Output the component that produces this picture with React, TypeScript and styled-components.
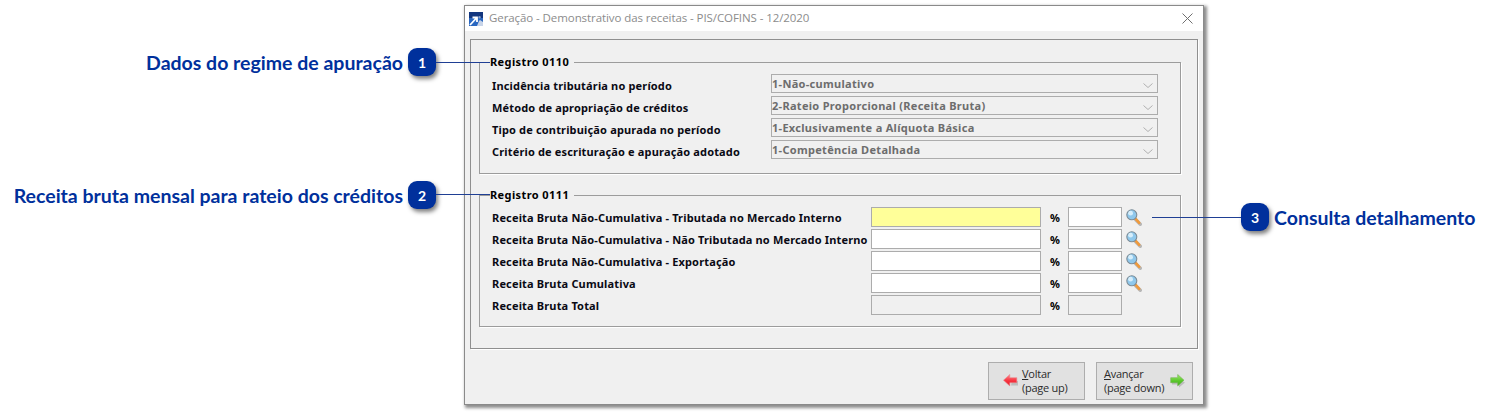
import { ReactNode } from 'react'
import styled, { createGlobalStyle } from 'styled-components'

const NAVY = '#00309c'
const UI_FONT = `Tahoma, "Noto Sans", "DejaVu Sans", sans-serif`

const GlobalStyle = createGlobalStyle`
  html, body {
    margin: 0;
    padding: 0;
    background: #ffffff;
  }
  body {
    overflow: hidden;
  }
`

const Page = styled.div`
  display: flex;
  width: 1491px;
  height: 417px;
  overflow: hidden;
  background: #ffffff;
`

const LeftNotes = styled.div`
  flex: 0 0 436px;
  display: flex;
  flex-direction: column;
  align-items: flex-end;
  gap: 105px;
  padding-top: 48px;
  margin-right: 28px;
  position: relative;
  z-index: 2;
`

const RightNotes = styled.div`
  display: flex;
  flex-direction: column;
  padding-top: 203px;
  margin-left: 37px;
  position: relative;
  z-index: 2;
`

const Callout = styled.div`
  position: relative;
  display: flex;
  align-items: center;
  gap: 5px;
  height: 28px;
  white-space: nowrap;
  font: 700 19.5px Lato, "Open Sans", sans-serif;
  color: ${NAVY};
`

const Badge = styled.span`
  display: flex;
  align-items: center;
  justify-content: center;
  width: 28px;
  height: 28px;
  border-radius: 9px;
  background: ${NAVY};
  color: #ffffff;
  font: 700 14px Lato, "Open Sans", sans-serif;
  box-shadow: 2px 3px 4px rgba(0, 0, 0, 0.5);
`

const Leader = styled.span<{ $side: 'before' | 'after'; $width: number; $top: number }>`
  position: absolute;
  ${({ $side }) => ($side === 'after' ? 'left' : 'right')}: 100%;
  top: ${({ $top }) => $top}px;
  width: ${({ $width }) => $width}px;
  height: 1px;
  background: #1f3f94;
`

const Dialog = styled.div`
  flex: 0 0 740px;
  box-sizing: border-box;
  width: 740px;
  height: 400px;
  margin-top: 5px;
  display: flex;
  flex-direction: column;
  background: #f0f0f0;
  border: 1px solid #8a8a8a;
  box-shadow: 2px 2px 3px 1px rgba(0, 0, 0, 0.45);
  font-family: ${UI_FONT};
`

const TitleBar = styled.div`
  flex: 0 0 25px;
  display: flex;
  align-items: center;
  padding: 0 10px 0 4px;
  background: #ffffff;
`

const TitleText = styled.span`
  flex: 1;
  margin-left: 6px;
  padding-bottom: 2px;
  font: 400 11.5px "Open Sans", sans-serif;
  color: #8c8c8c;
  letter-spacing: -0.08px;
`

const Panel = styled.div`
  box-sizing: border-box;
  height: 310px;
  margin: 8px 5px 0 5px;
  padding: 15px 16px 0 8px;
  display: flex;
  flex-direction: column;
  gap: 14px;
  border: 1px solid #8f8f8f;
  box-shadow: 1px 1px 0 #ffffff;
`

const Group = styled.fieldset<{ $height: number; $gap: number }>`
  box-sizing: border-box;
  height: ${({ $height }) => $height}px;
  margin: 0;
  padding: 5px 22px 0 12px;
  min-width: 0;
  display: flex;
  flex-direction: column;
  gap: ${({ $gap }) => $gap}px;
  border: 1px solid #9c9c9c;
  box-shadow: 1px 1px 0 #ffffff;
`

const Legend = styled.legend`
  margin-left: -2px;
  padding: 0 5px 0 0;
  font: 700 11px/14px "Noto Sans", sans-serif;
  letter-spacing: 0.4px;
  color: #000000;
`

const Row = styled.div`
  display: flex;
  align-items: center;
  height: 19px;
`

const Label = styled.span<{ $width: number; $drop: number }>`
  flex: 0 0 ${({ $width }) => $width}px;
  box-sizing: border-box;
  padding-top: ${({ $drop }) => $drop}px;
  font: 700 11px "Noto Sans", sans-serif;
  letter-spacing: 0.16px;
  color: #0a0a14;
  white-space: nowrap;
`

const Combo = styled.div`
  flex: 0 0 387px;
  box-sizing: border-box;
  height: 19px;
  display: flex;
  align-items: center;
  justify-content: space-between;
  padding: 0 4px 0 0;
  border: 1px solid #acacac;
  font: 700 11px "Noto Sans", sans-serif;
  letter-spacing: 0.3px;
  color: #6d6d6d;
`

const ChevronSlot = styled.span`
  display: flex;
  margin-top: 4px;
`

const ValueRow = styled(Row)`
  height: 20px;
`

const Input = styled.div<{ $width: number; $tone?: 'active' | 'disabled' }>`
  flex: 0 0 ${({ $width }) => $width}px;
  box-sizing: border-box;
  height: 20px;
  border: 1px solid #acacac;
  background: ${({ $tone }) =>
    $tone === 'active' ? '#ffff99' : $tone === 'disabled' ? '#f0f0f0' : '#ffffff'};
`

const Percent = styled.span`
  flex: 0 0 27px;
  padding-left: 9px;
  box-sizing: border-box;
  font: 700 11px "Noto Sans", sans-serif;
  color: #000000;
`

const LensButton = styled.span`
  display: flex;
  margin-left: 4px;
`

const Footer = styled.div`
  flex: 1;
  display: flex;
  justify-content: flex-end;
  gap: 11px;
  padding: 13px 10px 0 0;
`

const ActionButton = styled.div<{ $inset: number; $gap: number }>`
  box-sizing: border-box;
  width: 97px;
  height: 38px;
  display: flex;
  align-items: center;
  gap: ${({ $gap }) => $gap}px;
  padding-left: ${({ $inset }) => $inset}px;
  background: #e1e1e1;
  border: 1px solid #adadad;
  font: 400 11px/14px "Open Sans", sans-serif;
  letter-spacing: -0.25px;
  color: #2b2b2b;
`

const ButtonLabel = styled.span`
  white-space: nowrap;
  u {
    text-decoration: underline;
  }
`

const AppIcon = () => (
  <svg width="14" height="14" viewBox="0 0 14 14">
    <rect width="14" height="14" fill="#12367f" />
    <path d="M0 6h14v8H0z" fill="#2a67c0" />
    <path d="M8 14l2-5 1-1 3 2v4z" fill="#c8d4e8" />
    <path d="M10.5 6.5a1.3 1.3 0 1 1 .01 0z" fill="#8fa8d0" />
    <path d="M1 13l6-6.5M3.5 5.5H8V10" fill="none" stroke="#ffffff" strokeWidth="1.8" />
  </svg>
)

const CloseIcon = () => (
  <svg width="11" height="11" viewBox="0 0 11 11">
    <path d="M.5.5l10 10M10.5.5l-10 10" stroke="#6f6f6f" strokeWidth="1" fill="none" />
  </svg>
)

const Chevron = () => (
  <svg width="10" height="5" viewBox="0 0 10 5">
    <path d="M.5.5L5 4.5 9.5.5" stroke="#b0b0b0" strokeWidth="1" fill="none" />
  </svg>
)

const Lens = () => (
  <svg width="16" height="17" viewBox="0 0 16 17">
    <path d="M9.5 10.5l4.8 4.8" stroke="#8a8a8a" strokeWidth="3.4" strokeLinecap="round" opacity="0.55" />
    <path d="M9 9.2l4.2 4.6" stroke="#f09a3c" strokeWidth="2.6" strokeLinecap="round" />
    <circle cx="5.8" cy="5.8" r="5" fill="#8fc8ec" stroke="#7d8c96" strokeWidth="1.1" />
    <circle cx="4.6" cy="4.2" r="2.4" fill="#d6eefb" />
  </svg>
)

const LeftArrow = () => (
  <svg width="16" height="14" viewBox="0 0 16 14">
    <defs>
      <linearGradient id="arrow-red" x1="0" y1="0" x2="0" y2="1">
        <stop offset="0" stopColor="#ff8a90" />
        <stop offset="0.55" stopColor="#f8323e" />
        <stop offset="1" stopColor="#e0222e" />
      </linearGradient>
    </defs>
    <path d="M8 11.5L15 11.5V7L9 7z" fill="#9a9a9a" opacity="0.5" />
    <path d="M0.5 6.2L6.8 0.5v3.2h7v5h-7v3.2z" fill="url(#arrow-red)" stroke="#e8868c" strokeWidth="0.6" />
  </svg>
)

const RightArrow = () => (
  <svg width="16" height="14" viewBox="0 0 16 14">
    <defs>
      <linearGradient id="arrow-green" x1="0" y1="0" x2="0" y2="1">
        <stop offset="0" stopColor="#a4ea6c" />
        <stop offset="0.55" stopColor="#5ac82c" />
        <stop offset="1" stopColor="#45ad1e" />
      </linearGradient>
    </defs>
    <path d="M2 10.5h7v3l6-5-2-1H2z" fill="#9a9a9a" opacity="0.5" />
    <path d="M14 6.2L7.7 0.5v3.2h-7v5h7v3.2z" fill="url(#arrow-green)" stroke="#74b455" strokeWidth="0.6" />
  </svg>
)

const regime = [
  ['Incidência tributária no período', '1-Não-cumulativo'],
  ['Método de apropriação de créditos', '2-Rateio Proporcional (Receita Bruta)'],
  ['Tipo de contribuição apurada no período', '1-Exclusivamente a Alíquota Básica'],
  ['Critério de escrituração e apuração adotado', '1-Competência Detalhada'],
]

const receitas = [
  'Receita Bruta Não-Cumulativa - Tributada no Mercado Interno',
  'Receita Bruta Não-Cumulativa - Não Tributada no Mercado Interno',
  'Receita Bruta Não-Cumulativa - Exportação',
  'Receita Bruta Cumulativa',
]

const Note = ({ children, number }: { children: ReactNode; number: number }) => (
  <>
    {children}
    <Badge>{number}</Badge>
  </>
)

const App = () => {
  return (
    <Page>
      <GlobalStyle />
      <LeftNotes>
        <Callout>
          <Note number={1}>Dados do regime de apuração</Note>
          <Leader $side="after" $width={54} $top={14} />
        </Callout>
        <Callout>
          <Note number={2}>Receita bruta mensal para rateio dos créditos</Note>
          <Leader $side="after" $width={54} $top={13} />
        </Callout>
      </LeftNotes>
      <Dialog>
        <TitleBar>
          <AppIcon />
          <TitleText>Geração - Demonstrativo das receitas - PIS/COFINS - 12/2020</TitleText>
          <CloseIcon />
        </TitleBar>
        <Panel>
          <Group $height={119} $gap={3}>
            <Legend>Registro 0110</Legend>
            {regime.map(([label, value]) => (
              <Row key={label}>
                <Label $width={279} $drop={4}>
                  {label}
                </Label>
                <Combo>
                  {value}
                  <ChevronSlot>
                    <Chevron />
                  </ChevronSlot>
                </Combo>
              </Row>
            ))}
          </Group>
          <Group $height={139} $gap={2}>
            <Legend>Registro 0111</Legend>
            {receitas.map((label, index) => (
              <ValueRow key={label}>
                <Label $width={379} $drop={0}>
                  {label}
                </Label>
                <Input $width={170} $tone={index === 0 ? 'active' : undefined} />
                <Percent>%</Percent>
                <Input $width={54} />
                <LensButton>
                  <Lens />
                </LensButton>
              </ValueRow>
            ))}
            <ValueRow>
              <Label $width={379} $drop={0}>
                Receita Bruta Total
              </Label>
              <Input $width={170} $tone="disabled" />
              <Percent>%</Percent>
              <Input $width={54} $tone="disabled" />
            </ValueRow>
          </Group>
        </Panel>
        <Footer>
          <ActionButton $inset={14} $gap={3}>
            <LeftArrow />
            <ButtonLabel>
              <u>V</u>oltar
              <br />
              (page up)
            </ButtonLabel>
          </ActionButton>
          <ActionButton $inset={7} $gap={6}>
            <ButtonLabel>
              <u>A</u>vançar
              <br />
              (page down)
            </ButtonLabel>
            <RightArrow />
          </ActionButton>
        </Footer>
      </Dialog>
      <RightNotes>
        <Callout>
          <Leader $side="before" $width={89} $top={14} />
          <Badge>3</Badge>
          Consulta detalhamento
        </Callout>
      </RightNotes>
    </Page>
  )
}

export default App
